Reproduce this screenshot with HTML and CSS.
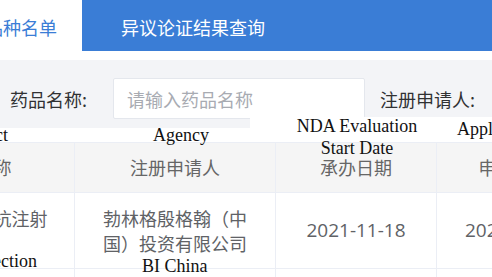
FILE: index.html
```html
<!DOCTYPE html>
<html lang="zh-CN">
<head>
  <meta charset="UTF-8" />
  <meta name="viewport" content="width=device-width, initial-scale=1.0"/>
  <title>品种名单</title>
  <link rel="stylesheet" href="styles.css">
</head>
<body>

  <div class="tabs">
    <div class="tab active">品种名单</div>
    <div class="tab">异议论证结果查询</div>
  </div>

  <div class="search">
    <div class="field">
      <span class="label">药品名称:</span>
      <input class="input" type="text" placeholder="请输入药品名称">
    </div>
    <div class="field">
      <span class="label">注册申请人:</span>
    </div>
  </div>

  <div class="table-wrap">
    <table class="list">
      <colgroup>
        <col class="c1"><col class="c2"><col class="c3"><col class="c4">
      </colgroup>
      <thead>
        <tr>
          <th>药品名称</th>
          <th>注册申请人</th>
          <th>承办日期</th>
          <th>申请日期</th>
        </tr>
      </thead>
      <tbody>
        <tr>
          <td>依达赛珠单抗注射液</td>
          <td>勃林格殷格翰（中国）投资有限公司</td>
          <td class="date">2021-11-18</td>
          <td class="date">2021-11-18</td>
        </tr>
        <tr>
          <td></td><td></td><td></td><td></td>
        </tr>
      </tbody>
    </table>
  </div>

  <!-- english annotations laid over the page -->
  <div class="mask"></div>
  <span class="note note-product">Product</span>
  <span class="note note-agency">Agency</span>
  <span class="note note-nda">NDA Evaluation<br>Start Date</span>
  <span class="note note-appl">Application Date</span>
  <span class="note note-inj">Idarucizumab Injection</span>
  <span class="note note-bi">BI China</span>

</body>
</html>
```

FILE: styles.css
```css
* {
  box-sizing: border-box;
}

body {
  margin: 0;
  position: relative;
  width: 492px;
  height: 277px;
  overflow: hidden;
  background: #fff;
  font-family: "Noto Sans CJK SC", sans-serif;
  font-size: 18px;
  color: #303133;
}

.tabs {
  display: flex;
  gap: 14px;
  height: 51px;
  margin-left: -40px;
  background: #3a7dd6;
}

.tab {
  padding: 3px 25px 0;
  line-height: 48px;
  color: #fff;
  white-space: nowrap;
}

.tab.active {
  background: #fff;
  color: #3a7dd6;
}

.search {
  display: flex;
  align-items: center;
  gap: 15px;
  height: 68px;
  margin-top: 9px;
  padding: 18px 0 9px 10px;
  background: #f3f4f7;
  white-space: nowrap;
}

.field {
  display: flex;
  align-items: center;
}

.label {
  margin-right: 26px;
  color: #303133;
}

.input {
  width: 252px;
  height: 41px;
  padding: 0 13px;
  border: 1px solid #e4e7ed;
  border-radius: 2px;
  background: #fff;
  font: inherit;
  color: #606266;
  outline: none;
}

.input::placeholder {
  color: #a8abb2;
}

.table-wrap {
  padding-top: 14px;
  margin-left: -124px;
}

.list {
  table-layout: fixed;
  border-collapse: collapse;
  width: 716px;
}

.list .c1 { width: 198px; }
.list .c2 { width: 201px; }
.list .c3 { width: 161px; }
.list .c4 { width: 156px; }

.list th,
.list td {
  border: 1px solid #ebeef5;
  padding: 0 22px;
  text-align: center;
  line-height: 25px;
}

.list th {
  height: 50px;
  background: #f5f5f5;
  font-weight: normal;
  color: #666;
}

.list td {
  height: 76px;
  color: #606266;
}

.list td.date {
  font-family: "Open Sans", "Noto Sans CJK SC", sans-serif;
  font-size: 19px;
}

.mask {
  position: absolute;
  left: 250px;
  top: 117px;
  width: 242px;
  height: 11px;
  background: #fff;
}

.note {
  position: absolute;
  font-family: "Liberation Serif", serif;
  font-size: 18px;
  line-height: 22px;
  color: #111;
  white-space: nowrap;
}

.note-product { left: -48px; top: 124px; }
.note-agency  { left: 153px; top: 124px; }
.note-nda     { left: 257px; top: 115px; width: 200px; text-align: center; }
.note-appl    { left: 457px; top: 118px; }
.note-inj     { left: -200px; top: 250px; width: 237px; text-align: right; }
.note-bi      { left: 142px; top: 255px; }
```
